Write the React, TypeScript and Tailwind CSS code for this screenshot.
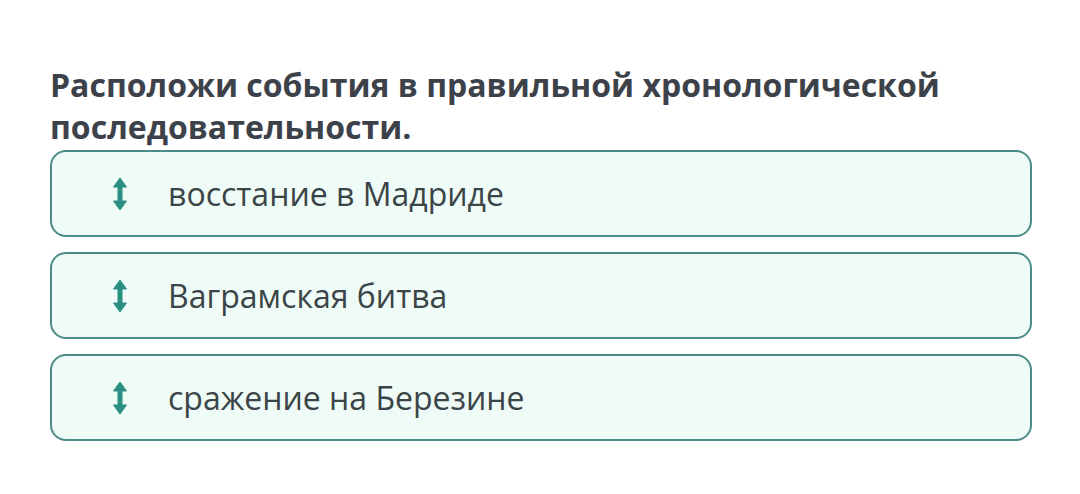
const items = ['восстание в Мадриде', 'Ваграмская битва', 'сражение на Березине']

function DragIcon() {
  return (
    <svg width="16" height="34" viewBox="0 0 16 34" className="text-[#2a8f82]">
      <path d="M8 1 L14.5 10 L1.5 10 Z" fill="currentColor" strokeLinejoin="round" stroke="currentColor" strokeWidth="1" />
      <rect x="5.5" y="9" width="5" height="16" fill="currentColor" />
      <path d="M8 33 L14.5 24 L1.5 24 Z" fill="currentColor" strokeLinejoin="round" stroke="currentColor" strokeWidth="1" />
    </svg>
  )
}

export default function App() {
  return (
    <div className="w-[1080px] h-[494px] bg-white font-['Open_Sans',sans-serif]">
      <div className="pl-[50px] pr-[48px] pt-[64px]">
        <h1 className="text-[32px] leading-[42px] font-bold text-[#3d424a]">
          Расположи события в правильной хронологической последовательности.
        </h1>
        <div className="mt-[2px] flex flex-col gap-[15px]">
          {items.map((t, i) => (
            <div
              key={i}
              className="h-[87px] rounded-[16px] border-2 border-[#4c8c86] bg-[#effbf6] flex items-center"
            >
              <div className="w-[116px] flex justify-end pr-[40px]">
                <DragIcon />
              </div>
              <span className="text-[32px] text-[#3b4447]">{t}</span>
            </div>
          ))}
        </div>
      </div>
    </div>
  )
}
